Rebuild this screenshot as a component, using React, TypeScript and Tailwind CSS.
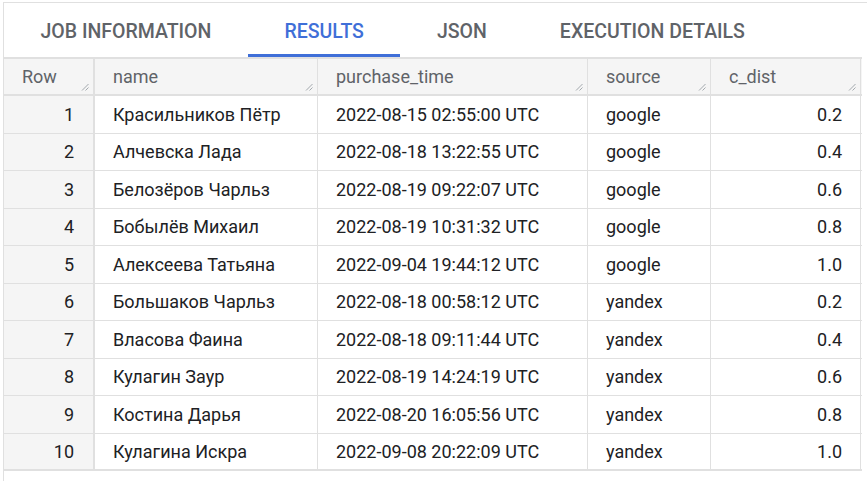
const rows = [
  ["Красильников Пётр", "2022-08-15 02:55:00 UTC", "google", "0.2"],
  ["Алчевска Лада", "2022-08-18 13:22:55 UTC", "google", "0.4"],
  ["Белозёров Чарльз", "2022-08-19 09:22:07 UTC", "google", "0.6"],
  ["Бобылёв Михаил", "2022-08-19 10:31:32 UTC", "google", "0.8"],
  ["Алексеева Татьяна", "2022-09-04 19:44:12 UTC", "google", "1.0"],
  ["Большаков Чарльз", "2022-08-18 00:58:12 UTC", "yandex", "0.2"],
  ["Власова Фаина", "2022-08-18 09:11:44 UTC", "yandex", "0.4"],
  ["Кулагин Заур", "2022-08-19 14:24:19 UTC", "yandex", "0.6"],
  ["Костина Дарья", "2022-08-20 16:05:56 UTC", "yandex", "0.8"],
  ["Кулагина Искра", "2022-09-08 20:22:09 UTC", "yandex", "1.0"],
];

const tabs = ["JOB INFORMATION", "RESULTS", "JSON", "EXECUTION DETAILS"];

function Grip() {
  return (
    <svg width="8" height="8" viewBox="0 0 8 8" className="absolute bottom-[3px] right-[4px]">
      <path d="M1 7.5 L7.5 1 M4.5 7.5 L7.5 4.5" stroke="#9aa0a6" strokeWidth="0.9" />
    </svg>
  );
}

function HeadCell({ label, w, thick }: { label: string; w: string; thick?: boolean }) {
  return (
    <div
      className={`relative flex items-center px-[18px] ${w} ${thick ? "border-r-2" : "border-r"} border-[#e0e0e0]`}
    >
      {label}
      <Grip />
    </div>
  );
}

export default function App() {
  return (
    <div
      className="w-[867px] h-[481px] bg-white pl-[3px] pt-[2px] overflow-hidden"
      style={{ fontFamily: "Roboto, 'Noto Sans', sans-serif" }}
    >
      <div className="h-full border-l border-t border-[#e0e0e0]">
        <div className="flex h-[54px] text-[19.5px] font-medium text-[#5f6368]">
          {tabs.map((t) => (
            <div
              key={t}
              className={`flex items-center pt-[7px] px-[36.5px] border-b-[3px] ${
                t === "RESULTS" ? "border-[#3f6fd8] text-[#3f6fd8]" : "border-transparent"
              }`}
            >
              {t}
            </div>
          ))}
        </div>
        <div className="w-[858px] text-[18px]">
          <div className="flex h-[39px] bg-[#f5f5f5] border-t-2 border-b-2 border-[#e0e0e0] text-[#5f6368]">
            <HeadCell label="Row" w="w-[91px]" thick />
            <HeadCell label="name" w="w-[223px]" />
            <HeadCell label="purchase_time" w="w-[270px]" />
            <HeadCell label="source" w="w-[123px]" />
            <HeadCell label="c_dist" w="w-[150px]" />
          </div>
          {rows.map((r, i) => (
            <div
              key={i}
              className={`flex h-[37.5px] text-[#202124] border-[#e0e0e0] ${
                i === rows.length - 1 ? "border-b-2" : "border-b"
              }`}
            >
              <div className="w-[91px] bg-[#f5f5f5] border-r-2 border-[#e0e0e0] flex items-center justify-end px-[19px]">
                {i + 1}
              </div>
              <div className="w-[223px] border-r border-[#e0e0e0] flex items-center px-[18px]">{r[0]}</div>
              <div className="w-[270px] border-r border-[#e0e0e0] flex items-center px-[18px]">{r[1]}</div>
              <div className="w-[123px] border-r border-[#e0e0e0] flex items-center px-[18px]">{r[2]}</div>
              <div className="w-[150px] border-r border-[#e0e0e0] flex items-center justify-end px-[18px]">
                {r[3]}
              </div>
            </div>
          ))}
        </div>
      </div>
    </div>
  );
}
